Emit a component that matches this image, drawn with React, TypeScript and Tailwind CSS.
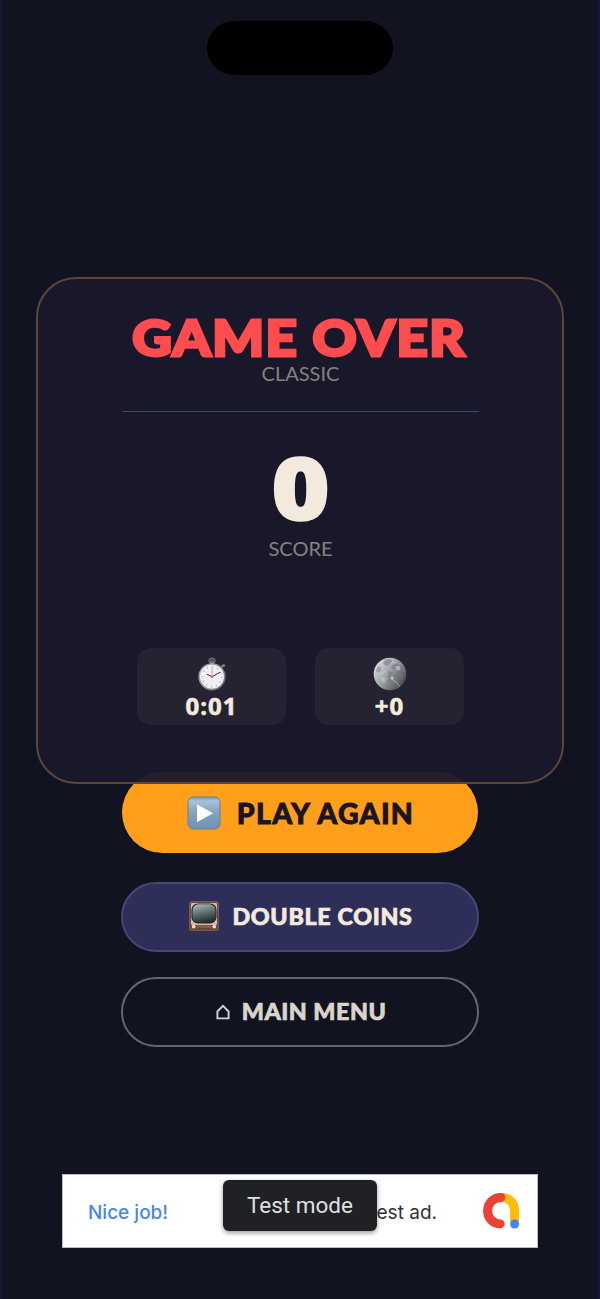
import type { ReactNode } from "react";

function StopwatchIcon() {
    return (
        <svg width="30" height="34" viewBox="0 0 30 34">
            <defs>
                <linearGradient id="watchRim" x1="0" y1="0" x2="1" y2="1">
                    <stop offset="0" stopColor="#b9bbc2" />
                    <stop offset="1" stopColor="#66676f" />
                </linearGradient>
            </defs>
            <ellipse cx="15" cy="3.6" rx="3.2" ry="2.6" fill="#4b4d58" stroke="#7b7d87" strokeWidth="0.9" />
            <rect x="13" y="4.5" width="4" height="3" fill="#7c7e88" />
            <path d="M24.2 10.4l2-2" stroke="#8b8d97" strokeWidth="1.8" />
            <circle cx="26.6" cy="8.4" r="1.5" fill="#777983" />
            <circle cx="15" cy="19.8" r="13.6" fill="url(#watchRim)" />
            <circle cx="15" cy="19.8" r="12" fill="#efeff2" />
            <circle cx="15" cy="19.8" r="9.9" fill="none" stroke="#9c9da6" strokeWidth="1.5" strokeDasharray="0.8 4.38" />
            <path d="M15 20.6V10.5" stroke="#e79aa3" strokeWidth="1.1" />
            <path d="M15 19.8l-4.8-2.4M15 19.8l7.6-4.4" stroke="#2c2d33" strokeWidth="1" strokeLinecap="round" />
            <circle cx="15" cy="19.8" r="1.2" fill="#d8606a" />
        </svg>
    );
}

function MoonIcon() {
    return (
        <svg width="34" height="34" viewBox="0 0 34 34">
            <defs>
                <linearGradient id="moonFill" x1="0.1" y1="0.2" x2="0.95" y2="0.8">
                    <stop offset="0" stopColor="#d5d9db" />
                    <stop offset="0.45" stopColor="#9a9fa2" />
                    <stop offset="1" stopColor="#45484c" />
                </linearGradient>
                <clipPath id="moonClip">
                    <circle cx="17" cy="17" r="16.3" />
                </clipPath>
            </defs>
            <circle cx="17" cy="17" r="16.3" fill="url(#moonFill)" />
            <g clipPath="url(#moonClip)">
                <path d="M12 3c3-2 8-1 7 2l-3 3c-2 1-6 0-6-2zM18 9l5-3 5 4-3 3-6-1zM15 14l5 1-1 5 2 3-4 3-4-3 2-4z" fill="#777c80" opacity="0.6" />
                <path d="M4 11c2-3 5-1 4 2s-5 3-5 1zM23 17c4-2 8 0 7 4s-6 3-7 1z" fill="#6f7478" opacity="0.45" />
                <path d="M17 8l2-3 4 1M15 21l-5 5M19 22l5 4 3 4M12 14l-5 5" stroke="#dfe3e4" strokeWidth="1.1" fill="none" opacity="0.4" />
                <circle cx="25" cy="11" r="2.2" fill="#cdd1d2" opacity="0.65" />
                <circle cx="19" cy="21" r="1.5" fill="#e3e6e7" opacity="0.7" />
                <circle cx="10" cy="22" r="2" fill="#e2e5e6" opacity="0.4" />
            </g>
        </svg>
    );
}

function PlayIcon() {
    return (
        <svg width="34" height="34" viewBox="0 0 34 34" className="shrink-0">
            <defs>
                <linearGradient id="playFill" x1="0" y1="0" x2="0" y2="1">
                    <stop offset="0" stopColor="#7796b7" />
                    <stop offset="0.12" stopColor="#a9c1da" />
                    <stop offset="0.5" stopColor="#83a1c0" />
                    <stop offset="1" stopColor="#7192b3" />
                </linearGradient>
            </defs>
            <rect x="1" y="1" width="32" height="32" rx="5.5" fill="url(#playFill)" stroke="#64809c" strokeWidth="1" />
            <path d="M10 8.3v18L26 17.2z" fill="#fff" />
        </svg>
    );
}

function TvIcon() {
    return (
        <svg width="30" height="30" viewBox="0 0 30 30" className="shrink-0">
            <defs>
                <linearGradient id="tvScreen" x1="0.3" y1="0" x2="0.6" y2="1">
                    <stop offset="0" stopColor="#a3b5b6" />
                    <stop offset="0.45" stopColor="#5f7476" />
                    <stop offset="1" stopColor="#202c2d" />
                </linearGradient>
            </defs>
            <rect x="0.7" y="0.7" width="28.6" height="28.6" rx="1.2" fill="#6a4839" stroke="#84604c" strokeWidth="1" />
            <rect x="2" y="2" width="26" height="22" rx="1" fill="#cdbbb0" />
            <rect x="2.4" y="2.4" width="25.2" height="20" rx="6.5" fill="#20292b" />
            <rect x="3.6" y="3.2" width="22.8" height="18.2" rx="5.8" fill="url(#tvScreen)" />
            <rect x="7.5" y="24.2" width="15" height="2.6" fill="#8d5e42" />
            <circle cx="4.7" cy="25.6" r="1.9" fill="#eadbcf" />
            <circle cx="25.3" cy="25.6" r="1.9" fill="#eadbcf" />
        </svg>
    );
}

function HomeIcon() {
    return (
        <svg width="14" height="16" viewBox="0 0 14 16" className="mt-[2px] shrink-0">
            <path d="M1.4 14.4V7.5L7 1.8l5.6 5.7v6.9z" fill="none" stroke="#d3d2d2" strokeWidth="1.9" />
        </svg>
    );
}

function AdMobLogo() {
    return (
        <svg width="38" height="38" viewBox="0 0 38 38" fill="none">
            <path d="M19.3 5.2C27 5.2 32.6 11 32.6 18.5V30" stroke="#fbbc04" strokeWidth="9" />
            <path d="M18.9 5.4C11.2 5.4 5.6 11.3 5.6 18.8c0 7.4 5.6 13.1 12.6 13.1" stroke="#ea4335" strokeWidth="9" strokeLinecap="round" />
            <circle cx="32.6" cy="32" r="4.5" fill="#4285f4" />
        </svg>
    );
}

function StatBox({ icon, value }: { icon: ReactNode; value: string }) {
    return (
        <div className="flex h-[77px] w-[149px] flex-col items-center rounded-[14px] bg-[#252331] pt-[9px] pl-px">
            <div className="flex h-[34px] items-center">{icon}</div>
            <span className="mt-[2px] font-['Open_Sans',sans-serif] text-[24px] leading-[26px] font-bold tracking-[1px] text-[#f3eadd] [-webkit-text-stroke:0.6px_#f3eadd]">
                {value}
            </span>
        </div>
    );
}

export default function App() {
    return (
        <main className="flex h-[1299px] w-[600px] flex-col items-center overflow-hidden border-x-2 border-[#17163a] bg-[#121320] font-['Lato',sans-serif]">
            <div className="mt-[21px] h-[54px] w-[186px] shrink-0 rounded-full bg-black" />

            {/* Results card, sits over the top edge of the play button */}
            <section className="relative z-10 mt-[202px] flex h-[507px] w-[528px] shrink-0 flex-col items-center rounded-[40px] border-2 border-[#5d4638] bg-[#1a182c]/95">
                <h1 className="mt-[35px] scale-x-[1.09] pr-[1px] text-[50px] leading-[46px] font-black tracking-[1.3px] whitespace-nowrap text-[#ff4d4f] [-webkit-text-stroke:3px_#ff4d4f]">
                    GAME OVER
                </h1>
                <p className="mt-px pl-px text-[20px] leading-[24px] text-[#86827a]">CLASSIC</p>
                <div className="mt-[26px] h-px w-[357px] bg-[#5d4340]" />
                <p className="mt-[36px] scale-x-[1.15] font-['Open_Sans',sans-serif] text-[87px] leading-[76px] font-extrabold text-[#f3eadd] [-webkit-text-stroke:1.5px_#f3eadd]">0</p>
                <p className="mt-[12px] pl-px text-[20px] leading-[24px] text-[#86827a]">SCORE</p>
                <div className="mt-[88px] flex gap-[29px]">
                    <StatBox icon={<StopwatchIcon />} value="0:01" />
                    <StatBox icon={<MoonIcon />} value="+0" />
                </div>
            </section>

            <button className="-mt-[12px] flex h-[81px] w-[356px] shrink-0 items-center justify-center gap-[16px] rounded-full bg-[#ff9f1c] pt-px pl-px text-[28.5px] font-black tracking-[1.3px] whitespace-nowrap text-[#1a1525] [-webkit-text-stroke:0.9px_#1a1525]">
                <PlayIcon />
                <span>PLAY AGAIN</span>
            </button>
            <button className="mt-[29px] flex h-[70px] w-[358px] shrink-0 items-center justify-center gap-[13px] rounded-full border-2 border-[#474777] bg-[#2d2f58] pb-[2px] pl-[2px] text-[23.3px] font-black tracking-[0.65px] whitespace-nowrap text-[#f3eadd] [-webkit-text-stroke:0.7px_#f3eadd]">
                <TvIcon />
                <span>DOUBLE COINS</span>
            </button>
            <button className="mt-[25px] flex h-[70px] w-[358px] shrink-0 items-center justify-center gap-[12px] rounded-full border-2 border-[#66656a] pb-[2px] pl-[2px] text-[23.3px] font-black tracking-[0.5px] whitespace-nowrap text-[#dad5ca] [-webkit-text-stroke:0.7px_#dad5ca]">
                <HomeIcon />
                <span>MAIN MENU</span>
            </button>

            {/* Ad banner */}
            <div className="relative mt-[127px] flex h-[74px] w-[476px] shrink-0 items-center border border-[#b9bccd] bg-white pr-[17px] pl-[25px] font-['Inter',sans-serif] text-[19px]">
                <span className="pt-[4px] font-medium text-[#4a86e8]">Nice job!</span>
                <span className="ml-auto pt-[4px] text-[#303134]">est ad.</span>
                <div className="ml-[45px]">
                    <AdMobLogo />
                </div>
                <div className="absolute top-[5px] left-[160px] flex h-[51px] w-[154px] items-center justify-center rounded-[6px] bg-[#202124] font-['Roboto',sans-serif] text-[22.5px] whitespace-nowrap text-[#dfe1e5] shadow-[0_2px_5px_rgba(0,0,0,0.4)]">
                    Test mode
                </div>
            </div>
        </main>
    );
}
